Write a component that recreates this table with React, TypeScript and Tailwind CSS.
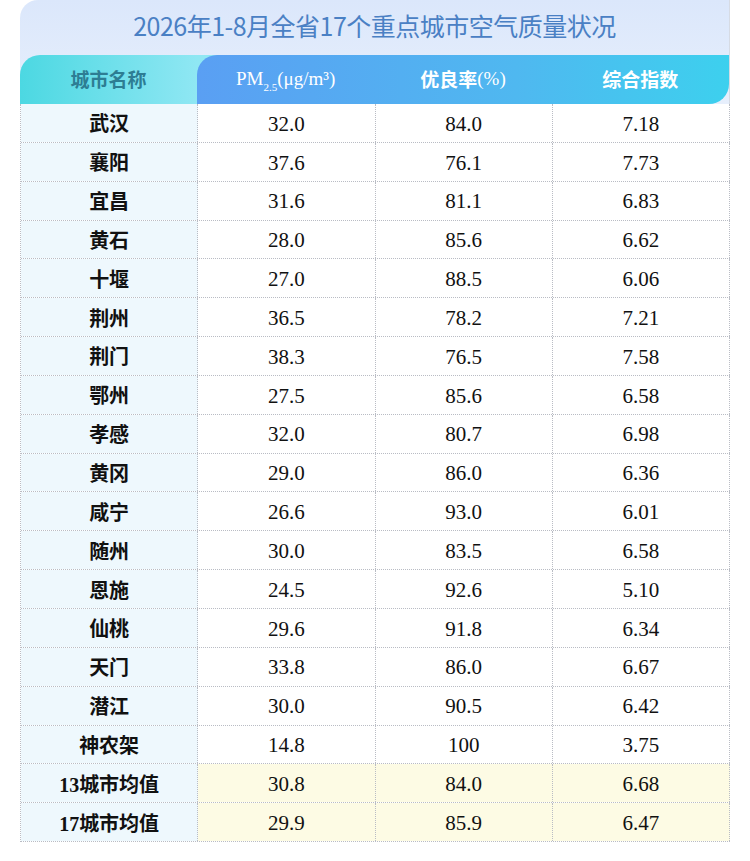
const rows = [
  ["武汉", "32.0", "84.0", "7.18"],
  ["襄阳", "37.6", "76.1", "7.73"],
  ["宜昌", "31.6", "81.1", "6.83"],
  ["黄石", "28.0", "85.6", "6.62"],
  ["十堰", "27.0", "88.5", "6.06"],
  ["荆州", "36.5", "78.2", "7.21"],
  ["荆门", "38.3", "76.5", "7.58"],
  ["鄂州", "27.5", "85.6", "6.58"],
  ["孝感", "32.0", "80.7", "6.98"],
  ["黄冈", "29.0", "86.0", "6.36"],
  ["咸宁", "26.6", "93.0", "6.01"],
  ["随州", "30.0", "83.5", "6.58"],
  ["恩施", "24.5", "92.6", "5.10"],
  ["仙桃", "29.6", "91.8", "6.34"],
  ["天门", "33.8", "86.0", "6.67"],
  ["潜江", "30.0", "90.5", "6.42"],
  ["神农架", "14.8", "100", "3.75"],
  ["13城市均值", "30.8", "84.0", "6.68"],
  ["17城市均值", "29.9", "85.9", "6.47"],
];

const serif = "font-['Liberation_Serif','Noto_Sans_CJK_SC',serif]";

export default function App() {
  return (
    <div className="w-[750px] h-[861px] bg-white overflow-hidden">
      <div className="ml-[20px] w-[710px] rounded-tl-[18px] bg-[linear-gradient(to_bottom,#dbe7fb,#e7effc)] border-r border-[#d6dbe4]">
        {/* title */}
        <div className="h-[55px] flex items-center justify-center pb-[4px] font-['Noto_Sans_CJK_SC',sans-serif] text-[25px] tracking-[-0.5px] text-[#4a80c4]">
          2026年1-8月全省17个重点城市空气质量状况
        </div>

        {/* header */}
        <div className="flex h-[49px]">
          <div className="w-[177px] rounded-tl-[20px] bg-[linear-gradient(to_right,#4cd8e2,#8fe7f3)] flex items-center justify-center font-['Noto_Sans_CJK_SC',sans-serif] font-bold text-[19px] text-[#2d7d93]">
            城市名称
          </div>
          <div className="flex-1 bg-[linear-gradient(to_right,#8fe7f3_24px,transparent_24px)]">
            <div className="h-full rounded-tl-[20px] rounded-br-[20px] bg-[linear-gradient(to_right,#5a9ff3,#4fb8f0_60%,#3dd0ee)] grid grid-cols-3 text-white">
              <div className={`flex items-center justify-center ${serif} text-[19px]`}>
                <span>PM</span>
                <span className="text-[11px] relative top-[8px]">2.5</span>
                <span>(μg/m³)</span>
              </div>
              <div className="flex items-center justify-center font-['Noto_Sans_CJK_SC',sans-serif] font-bold text-[19px]">
                优良率<span className={`${serif} font-normal`}>(%)</span>
              </div>
              <div className="flex items-center justify-center font-['Noto_Sans_CJK_SC',sans-serif] font-bold text-[19px]">
                综合指数
              </div>
            </div>
          </div>
        </div>
      </div>

      {/* body */}
      <div className={`ml-[20px] w-[710px] border-l border-dotted border-[#b9bcc4] ${serif} text-[20px] text-[#111]`}>
        {rows.map((r, i) => {
          const avg = i >= 17;
          return (
            <div key={r[0]} className="grid grid-cols-4 h-[38.85px] border-b border-dotted border-[#b9bcc4]">
              <div className="flex items-center justify-center pt-[3px] bg-[#eef8fd] border-r border-dotted border-[#b9bcc4] font-bold font-['Liberation_Serif','Noto_Sans_CJK_SC',serif]">
                {r[0]}
              </div>
              {r.slice(1).map((v, j) => (
                <div
                  key={j}
                  className={`flex items-center justify-center pt-[3px] text-[21px] border-r border-dotted border-[#b9bcc4] ${avg ? "bg-[#fdfbe4]" : "bg-white"}`}
                >
                  {v}
                </div>
              ))}
            </div>
          );
        })}
      </div>
    </div>
  );
}
